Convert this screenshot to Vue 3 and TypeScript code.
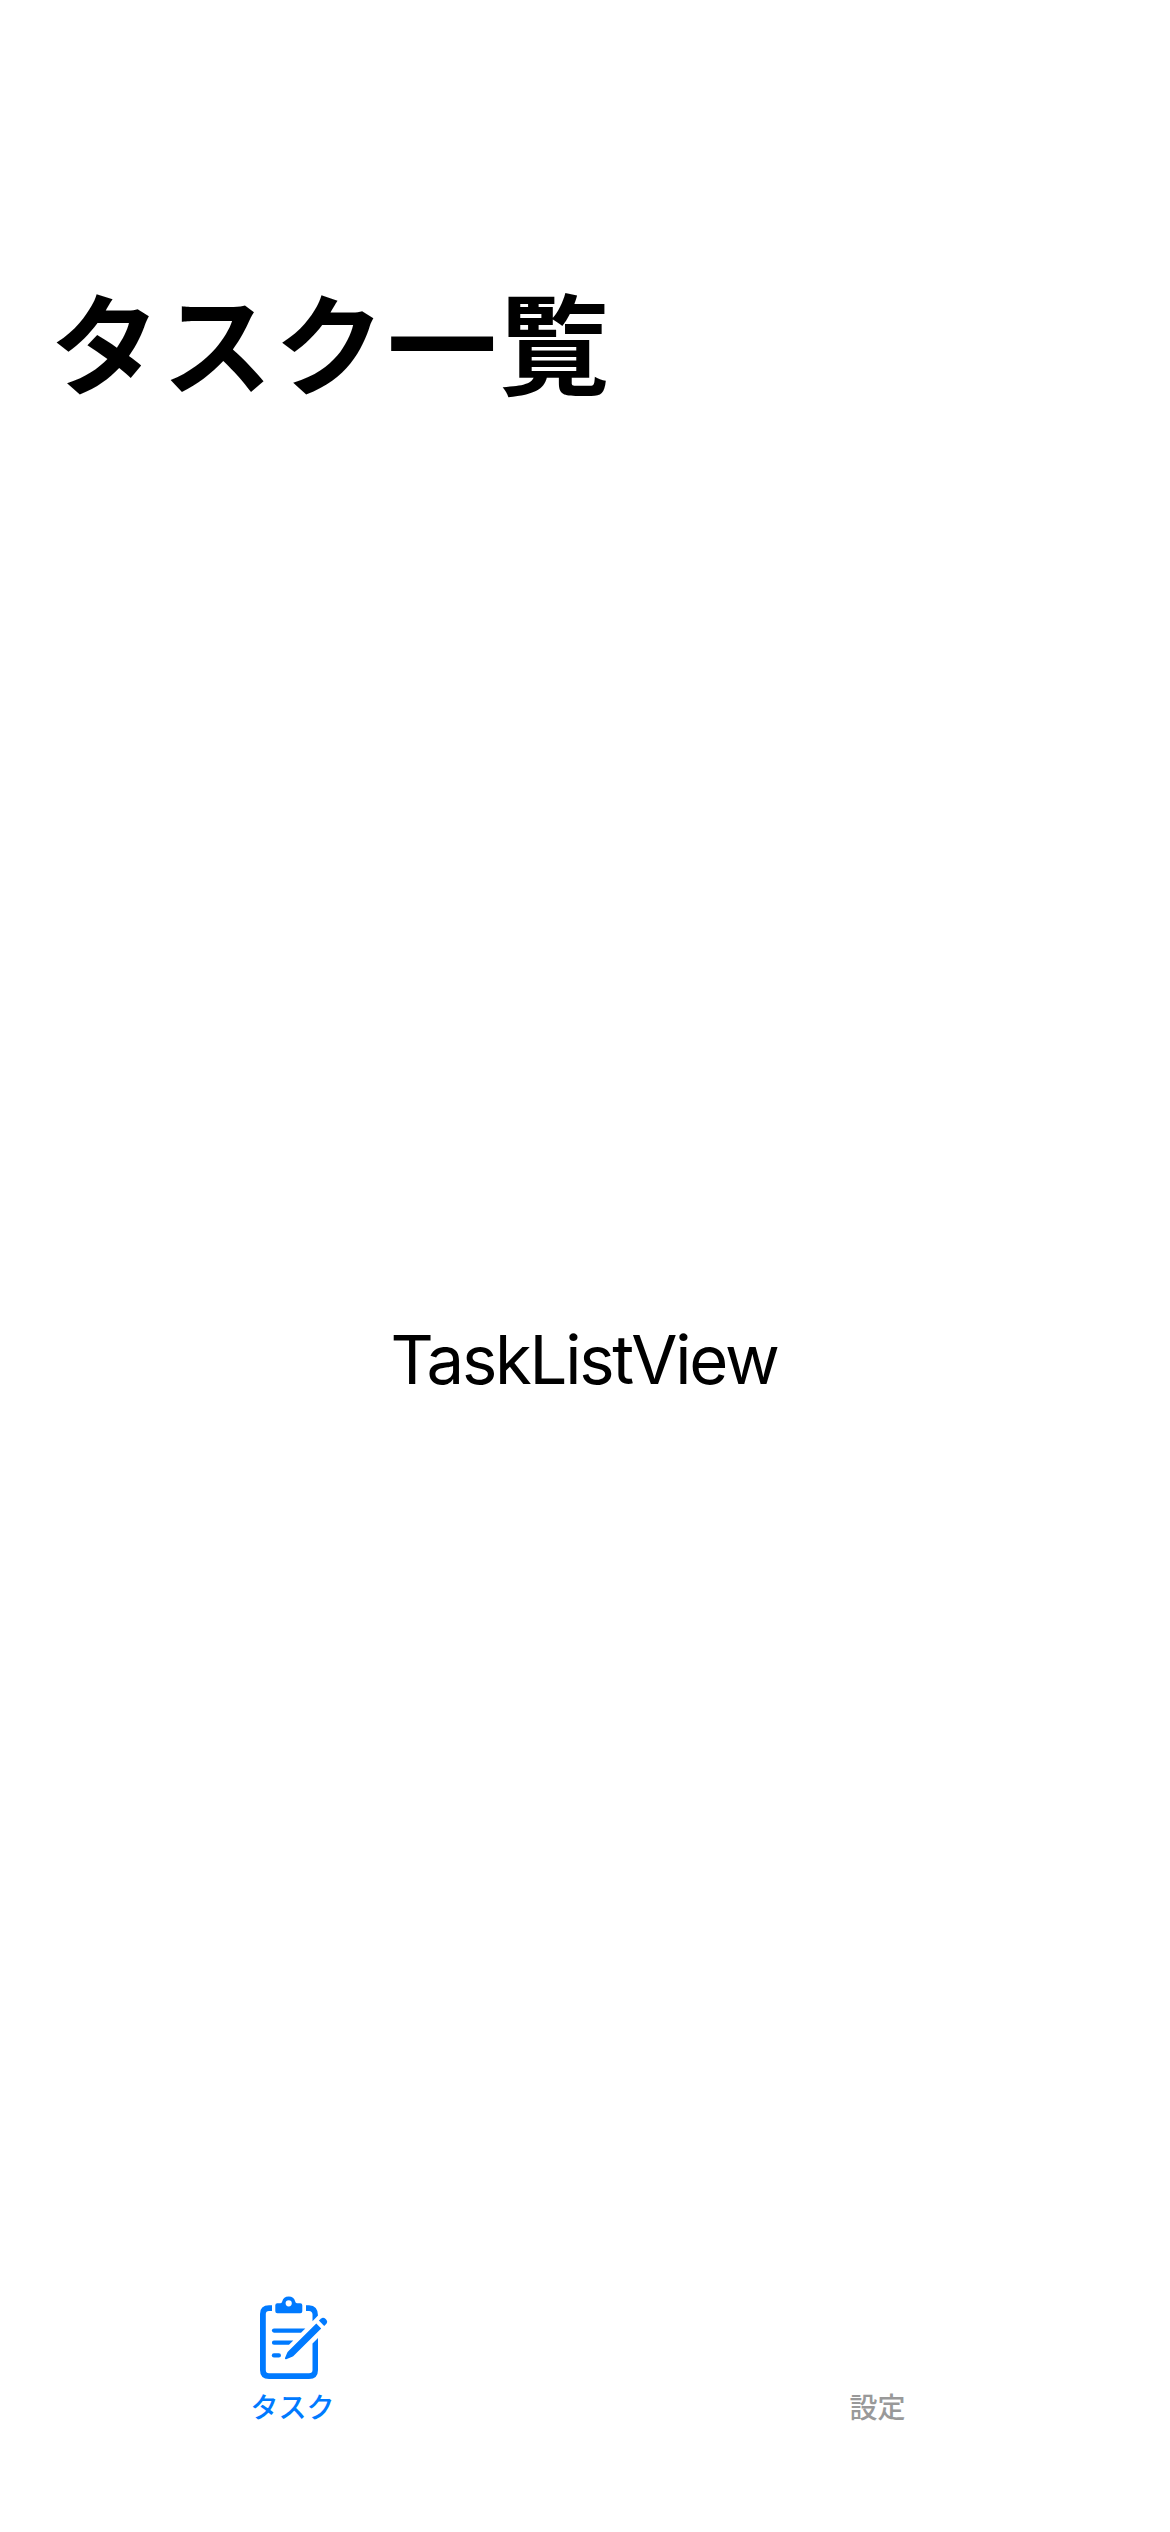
<script setup lang="ts">
interface Tab { id: string; label: string; active: boolean }
const tabs: Tab[] = [
  { id: 'tasks', label: 'タスク', active: true },
  { id: 'settings', label: '設定', active: false },
]
</script>

<template>
  <div class="screen">
    <h1 class="title">タスク一覧</h1>
    <main class="content"><span class="view-name">TaskListView</span></main>
    <nav class="tabs">
      <button v-for="tab in tabs" :key="tab.id" class="tab" :class="{ active: tab.active }">
        <span class="icon-box">
          <svg v-if="tab.id === 'tasks'" class="icon" viewBox="17 16 71 84" fill="currentColor">
            <!-- board outline, open where the clip and the pencil pass -->
            <path d="M32 25.3H29Q20 25.3 20 34V90Q20 99 29 99H69Q78 99 78 90V58L72.5 63.5V90Q72.5 93.2 69 93.2H29Q25.8 93.2 25.8 90V34Q25.8 31 29 31H32Z" />
            <path d="M66 25.3H69Q78 25.8 78 35.5L72.5 41.3V34.5Q72.3 31.3 69 31H66Z" />
            <!-- clip with its hole -->
            <path fill-rule="evenodd" d="M37.3 23.3H40.4Q42 23.3 42.2 21.5A6.7 6.7 0 0 1 55.2 21.5Q55.5 23.3 57 23.3H60.3Q62.3 23.3 62.3 25.3V31.3Q62.3 33.3 60.3 33.3H37.3Q35.3 33.3 35.3 31.3V25.3Q35.3 23.3 37.3 23.3ZM48.7 20.2A3.1 3.1 0 1 0 48.7 26.4A3.1 3.1 0 1 0 48.7 20.2Z" />
            <path d="M34 48.5H65.3L61 52.7H34A2.1 2.1 0 0 1 34 48.5Z" />
            <path d="M34 60.6H53.3L49 64.8H34A2.1 2.1 0 0 1 34 60.6Z" />
            <rect x="31.8" y="73.3" width="9.2" height="4.3" rx="2.15" />
            <path d="M76.3 43.5L81.2 48.4L53.2 76.3Q52.3 77 51 77.3L46.2 79.3Q44.7 79.5 45 78L47.2 72.8Q47.5 71.8 48.3 71.2Z" />
            <path d="M78.9 40.6L81.2 38.4Q83.3 36.8 85.7 39Q88.2 41.4 86.4 43.7L84.2 46Z" />
          </svg>
        </span>
        <span class="label">{{ tab.label }}</span>
      </button>
    </nav>
  </div>
</template>

<style>
body { margin: 0; background: #fff; }
</style>
<style scoped>
.screen { width: 1170px; height: 2532px; display: flex; flex-direction: column; background: #fff; color: #000; font-family: Inter, "Noto Sans CJK JP", sans-serif; }
.title { margin: 0; padding: 277px 50px 0; height: 124px; line-height: 124px; font-size: 110px; letter-spacing: 2.3px; font-weight: 700; font-family: "Noto Sans CJK JP", sans-serif; }
.content { flex: 1; display: flex; justify-content: center; padding: 919px 2px 0 0; line-height: 80px; font-size: 67px; letter-spacing: -2.25px; }
.tabs { display: flex; height: 243px; }
.tab { flex: 1; display: flex; flex-direction: column; align-items: center; padding: 7px 0 0; border: 0; background: none; color: #999; }
.active { color: #007aff; }
.icon-box { height: 90px; }
.icon { display: block; width: 71px; height: 84px; }
.label { font: 500 28px/40px "Noto Sans CJK JP", sans-serif; }
</style>
